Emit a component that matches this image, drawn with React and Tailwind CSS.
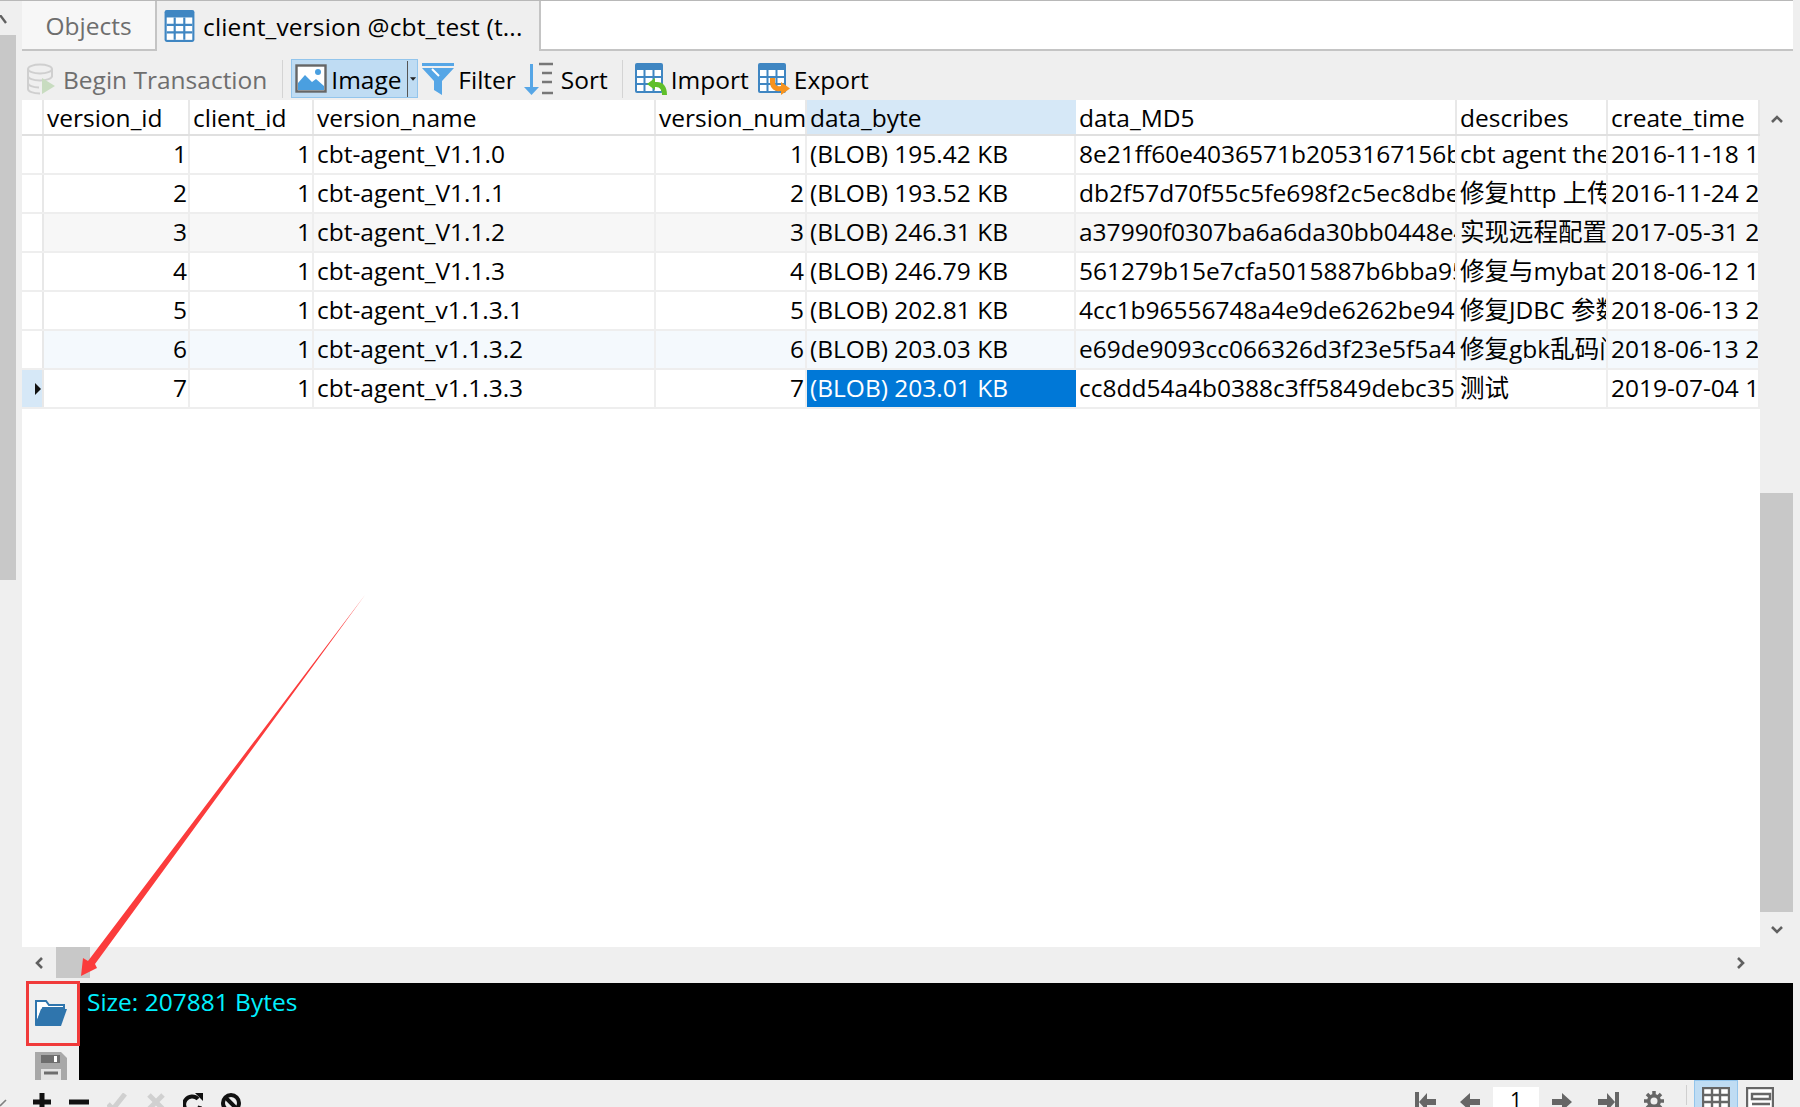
import React from 'react';

const FONT = { fontFamily: '"Open Sans", "Noto Sans CJK SC", sans-serif' };

const rows = [
  ['1', '1', 'cbt-agent_V1.1.0', '1', '(BLOB) 195.42 KB', '8e21ff60e4036571b2053167156b', 'cbt agent the', '2016-11-18 1'],
  ['2', '1', 'cbt-agent_V1.1.1', '2', '(BLOB) 193.52 KB', 'db2f57d70f55c5fe698f2c5ec8dbe', '修复http 上传', '2016-11-24 2'],
  ['3', '1', 'cbt-agent_V1.1.2', '3', '(BLOB) 246.31 KB', 'a37990f0307ba6a6da30bb0448e4', '实现远程配置:', '2017-05-31 2'],
  ['4', '1', 'cbt-agent_V1.1.3', '4', '(BLOB) 246.79 KB', '561279b15e7cfa5015887b6bba95', '修复与mybati', '2018-06-12 1'],
  ['5', '1', 'cbt-agent_v1.1.3.1', '5', '(BLOB) 202.81 KB', '4cc1b96556748a4e9de6262be94', '修复JDBC 参数', '2018-06-13 2'],
  ['6', '1', 'cbt-agent_v1.1.3.2', '6', '(BLOB) 203.03 KB', 'e69de9093cc066326d3f23e5f5a4', '修复gbk乱码问', '2018-06-13 2'],
  ['7', '1', 'cbt-agent_v1.1.3.3', '7', '(BLOB) 203.01 KB', 'cc8dd54a4b0388c3ff5849debc35', '测试', '2019-07-04 1'],
];

const headers = ['version_id', 'client_id', 'version_name', 'version_num', 'data_byte', 'data_MD5', 'describes', 'create_time'];
const rightAligned = [true, true, false, true, false, false, false, false];
const GRID = 'grid grid-cols-[22px_146px_124px_342px_151px_269px_381px_151px_152px]';

function TableShape() {
  return (
    <>
      <rect x="0" y="0" width="28" height="30" rx="2" fill="#3f86c2" />
      <rect x="2" y="7" width="24" height="21" fill="#fff" />
      <path d="M2 14h24M2 21h24M9.500 7v21M18.500 7v21" stroke="#3f86c2" strokeWidth="2" />
    </>
  );
}

function TableIcon({ children }) {
  return (
    <svg width="32" height="32" viewBox="0 0 32 32" className="shrink-0">
      <TableShape />
      {children}
    </svg>
  );
}

function ToolButton({ icon, label, gray, gap = 'gap-[5px]' }) {
  return (
    <div className={`flex items-center ${gap} text-[24.5px] ${gray ? 'text-[#6e6e6e]' : 'text-black'}`}>
      {icon}
      <span className="pt-[3px]">{label}</span>
    </div>
  );
}

function Chevron({ d }) {
  return (
    <svg width="14" height="14" viewBox="0 0 14 14">
      <path d={d} fill="none" stroke="#606060" strokeWidth="2.6" />
    </svg>
  );
}

function Toolbar() {
  return (
    <div className="flex items-center h-[49px] shrink-0 pl-[4px] pt-[6px] bg-[#efefef]">
      <ToolButton
        gray
        gap="gap-[7px]"
        label="Begin Transaction"
        icon={
          <svg width="30" height="32" viewBox="0 0 30 32">
            <ellipse cx="14" cy="6" rx="12" ry="4.5" fill="none" stroke="#cfcfcf" strokeWidth="2" />
            <path d="M2 6v20c0 2.5 5 4.5 12 4.5M26 6v8M2 13c0 2.5 5 4.5 12 4.5s12-2 12-4.5M2 20c0 2.5 5 4.5 11 4.5" fill="none" stroke="#cfcfcf" strokeWidth="2" />
            <path d="M16 15l13 8-13 8z" fill="#c8dcc0" />
          </svg>
        }
      />
      <div className="w-[1px] h-[38px] bg-[#d4d4d4] ml-[15px] mr-[8px]" />
      <div className="flex items-center h-[39px] w-[127px] shrink-0 bg-[#bfdcf3] border border-[#93c5ec] pl-[3px] text-[24.5px]">
        <svg width="32" height="29" viewBox="0 0 32 29" className="shrink-0">
          <rect x="1.5" y="1.5" width="29" height="26" fill="#fff" stroke="#666" strokeWidth="2.4" />
          <path d="M3 26V19l7-8 7 7 4-3 8 7v4z" fill="#4a9fe0" />
          <circle cx="23" cy="8" r="3" fill="#4a9fe0" />
        </svg>
        <span className="ml-[4px] pt-[3px]">Image</span>
        <div className="ml-[5px] w-[1px] h-[36px] bg-[#555]" />
        <svg width="8" height="4" viewBox="0 0 8 4" className="ml-[3px]"><path d="M0 0h7L3.5 4z" fill="#222" /></svg>
      </div>
      <div className="ml-[4px]">
        <ToolButton
          label="Filter"
          gap="gap-[4px]"
          icon={
            <svg width="32" height="32" viewBox="0 0 32 32">
              <path d="M0 0h32v3H0zM0 5h32L20 18v14l-8-5v-9z" fill="#56a6e6" />
              <path d="M10 6l7 7" stroke="#fff" strokeWidth="2" />
            </svg>
          }
        />
      </div>
      <div className="ml-[6px]">
        <ToolButton
          label="Sort"
          gap="gap-[7px]"
          icon={
            <svg width="32" height="34" viewBox="0 0 32 34">
              <path d="M8 2h3v23h6L9.500 33 2 25h6z" fill="#56a6e6" />
              <path d="M17 2h14M20 11h10M20 20h10M20 31h11" stroke="#777" strokeWidth="2.4" />
            </svg>
          }
        />
      </div>
      <div className="w-[1px] h-[38px] bg-[#d4d4d4] ml-[14px] mr-[12px]" />
      <ToolButton
        label="Import"
        gap="gap-[4px]"
        icon={
          <TableIcon>
            <path d="M12 21L20 15V19H22C28 19 32 23 32 32H27C27 27 25 24 21 24H20V27z" fill="#5fbf2a" />
          </TableIcon>
        }
      />
      <div className="ml-[9px]">
        <ToolButton
          label="Export"
          gap="gap-[4px]"
          icon={
            <TableIcon>
              <path d="M12 15H17V19C17 22 19 24 23 23V19L32 25.5 23 32V28C16 29 12 25 12 19z" fill="#f7931e" />
            </TableIcon>
          }
        />
      </div>
    </div>
  );
}

function Table() {
  return (
    <div className="flex-1 min-h-0 bg-white text-[24.5px] text-black">
      <div className={`${GRID} h-[36px] border-b-2 border-[#e0e0e0]`}>
        <div className="border-r-2 border-[#e8e8e8]" />
        {headers.map((h, i) => (
          <div
            key={h}
            className={`overflow-hidden whitespace-nowrap pl-[3px] leading-[35px] ${i === 4 ? 'bg-[#d6e8f7]' : 'border-r-2 border-[#e8e8e8]'}`}
          >
            {h}
          </div>
        ))}
      </div>
      {rows.map((row, r) => (
        <div
          key={r}
          className={`${GRID} h-[39px] border-b-2 border-[#eeeeee] ${r === 2 ? 'bg-[#f7f7f7]' : ''} ${r === 5 ? 'bg-[#f4f9fd]' : ''}`}
        >
          <div className={`flex items-center pl-[13px] border-r-2 border-[#e8e8e8] ${r === 6 ? 'bg-[#d6e8f7]' : 'bg-white'}`}>
            {r === 6 && <svg width="6" height="12" viewBox="0 0 6 12"><path d="M0 0l6 6-6 6z" fill="#111" /></svg>}
          </div>
          {row.map((cell, c) => (
            <div
              key={c}
              className={`overflow-hidden whitespace-nowrap leading-[36px] ${rightAligned[c] ? 'text-right pr-[1px]' : 'pl-[3px]'} ${r === 6 && c === 4 ? 'bg-[#0078d7] text-white' : 'border-r-2 border-[#eeeeee]'}`}
            >
              {cell}
            </div>
          ))}
        </div>
      ))}
    </div>
  );
}

function BottomIcons() {
  return (
    <div className="flex items-start h-[27px] shrink-0 overflow-hidden bg-[#efefef]">
      <div className="flex items-start w-[260px] pt-[13px] pl-[11px] gap-[18px]">
        <svg width="18" height="18" viewBox="0 0 18 18"><path d="M9 0v18M0 9h18" stroke="#111" strokeWidth="5" /></svg>
        <svg width="20" height="18" viewBox="0 0 20 18"><path d="M0 9h20" stroke="#111" strokeWidth="5" /></svg>
        <svg width="20" height="18" viewBox="0 0 20 18"><path d="M1 11l5 5L18 1" fill="none" stroke="#d0d0d0" strokeWidth="5" /></svg>
        <svg width="18" height="18" viewBox="0 0 18 18" className="ml-[2px]"><path d="M2 2l14 14M16 2L2 16" stroke="#d0d0d0" strokeWidth="5" /></svg>
        <svg width="20" height="20" viewBox="0 0 20 20"><path d="M15 6a8 8 0 1 0 2 7" fill="none" stroke="#111" strokeWidth="4" /><path d="M12 0h8v8z" fill="#111" /></svg>
        <svg width="20" height="20" viewBox="0 0 20 20"><circle cx="10" cy="10" r="8" fill="none" stroke="#111" strokeWidth="4" /><path d="M4 4l12 12" stroke="#111" strokeWidth="4" /></svg>
      </div>
      <div className="flex-1" />
      <div className="flex items-start h-full mr-[19px]">
        <svg width="22" height="20" viewBox="0 0 22 20" className="mt-[12px] mr-[24px]"><path d="M1 0h4v20H1zM22 7H13V1L5 10l8 9v-6h9z" fill="#666" /></svg>
        <svg width="20" height="20" viewBox="0 0 20 20" className="mt-[12px] mr-[13px]"><path d="M20 7h-10V1L0 10l10 9v-6h10z" fill="#666" /></svg>
        <div className="w-[46px] h-[20px] mt-[7px] bg-white text-center text-[21px] leading-[26px] text-black">1</div>
        <svg width="20" height="20" viewBox="0 0 20 20" className="mt-[12px] ml-[13px] mr-[26px]"><path d="M0 7h10V1l10 9-10 9v-6H0z" fill="#666" /></svg>
        <svg width="22" height="20" viewBox="0 0 22 20" className="mt-[12px] mr-[24px]"><path d="M21 0h-4v20h4zM0 7h9V1l8 9-8 9v-6H0z" fill="#666" /></svg>
        <svg width="20" height="20" viewBox="0 0 20 20" className="mt-[11px]">
          <path d="M10 0v20M0 10h20M3 3l14 14M17 3L3 17" stroke="#666" strokeWidth="3.500" />
          <circle cx="10" cy="10" r="7" fill="#666" />
          <circle cx="10" cy="10" r="3.500" fill="#efefef" />
        </svg>
        <div className="w-[1px] h-[20px] bg-[#cfcfcf] mt-[5px] ml-[22px] mr-[7px]" />
        <div className="flex justify-center w-[44px] h-full pt-[6px] bg-[#bfdcf3] border border-[#93c5ec] border-b-0 mr-[8px]">
          <svg width="28" height="22" viewBox="0 0 28 22"><rect x="1" y="1" width="26" height="24" fill="#fff" stroke="#666" strokeWidth="2.400" /><path d="M1 8h26M1 15h26M10 1v24M18 1v24" stroke="#666" strokeWidth="2.400" /></svg>
        </div>
        <svg width="28" height="22" viewBox="0 0 28 22" className="mt-[7px]"><rect x="1" y="1" width="26" height="24" fill="#fff" stroke="#666" strokeWidth="2.400" /><path d="M6 7h18v5H6zM6 17h18" fill="none" stroke="#666" strokeWidth="2.400" /></svg>
      </div>
    </div>
  );
}

export default function App() {
  return (
    <div className="relative flex w-[1800px] h-[1107px] overflow-hidden bg-[#efefef]" style={FONT}>
      {/* left edge: outer scrollbar strip */}
      <div className="flex flex-col w-[22px] shrink-0 bg-[#efefef]">
        <div className="h-[1px] bg-[#b8b8b8]" />
        <div className="w-[16px] h-[34px] pt-[14px]">
          <svg width="8" height="10" viewBox="0 0 8 10"><path d="M0 0l6 8" fill="none" stroke="#606060" strokeWidth="2.400" /></svg>
        </div>
        <div className="w-[16px] h-[545px] bg-[#c8c8c8]" />
        <svg width="8" height="8" viewBox="0 0 8 8" className="mt-auto"><path d="M0 7l6-6" fill="none" stroke="#808080" strokeWidth="1.600" /></svg>
      </div>

      <div className="flex flex-col w-[1771px] shrink-0">
        <div className="h-[1px] shrink-0 bg-[#b8b8b8]" />
        {/* tab strip */}
        <div className="flex h-[50px] shrink-0 text-[24.5px] bg-white border-b-2 border-[#c4c4c4]">
          <div className="flex items-center justify-center w-[135px] pt-[3px] bg-[#f7f7f7] text-[#6e6e6e] border-r-2 border-[#c4c4c4]">Objects</div>
          <div className="flex items-center w-[384px] pl-[7px] -mb-[2px] bg-[#efefef] text-black gap-[8px] border-r-2 border-[#c4c4c4]">
            <svg width="31" height="32" viewBox="0 0 28 30" className="shrink-0"><TableShape /></svg>
            <span className="pt-[3px] tracking-[0.15px]">client_version @cbt_test (t...</span>
          </div>
          <div className="flex-1 min-w-0" />
        </div>
        <Toolbar />

        <div className="flex flex-1 min-h-0 bg-[#efefef]">
          <Table />
          {/* vertical scrollbar */}
          <div className="flex flex-col items-center w-[33px] shrink-0">
            <div className="flex items-center justify-center h-[38px]"><Chevron d="M2 10l5-5 5 5" /></div>
            <div className="h-[355px]" />
            <div className="w-full h-[419px] bg-[#c8c8c8]" />
            <div className="flex items-center justify-center h-[35px]"><Chevron d="M2 4l5 5 5-5" /></div>
          </div>
        </div>

        {/* horizontal scrollbar */}
        <div className="flex items-start h-[36px] shrink-0 bg-[#efefef]">
          <div className="flex items-center justify-center w-[34px] h-[32px]"><Chevron d="M10 2L5 7l5 5" /></div>
          <div className="w-[34px] h-[31px] bg-[#c8c8c8]" />
          <div className="flex-1" />
          <div className="flex items-center justify-center w-[70px] h-[32px] pr-[34px]"><Chevron d="M4 2l5 5-5 5" /></div>
        </div>

        {/* blob viewer */}
        <div className="flex h-[97px] shrink-0">
          <div className="flex flex-col w-[57px] shrink-0 bg-[#efefef] overflow-visible">
            <div className="relative flex items-center justify-center w-[54px] h-[66px] -mt-[2px] ml-[4px] pr-[4px] pb-[4px] border-[3px] border-[#f03a3a] z-10">
              <svg width="34" height="30" viewBox="0 0 34 30" className="shrink-0">
                <path d="M2 28V4h10l3 4h15v3H9z" fill="#fff" stroke="#2f75ad" strokeWidth="2" />
                <path d="M1 29l6-17h26l-6 17z" fill="#2f75ad" />
              </svg>
            </div>
            <div className="flex justify-center w-[54px] ml-[4px] pr-[4px] pt-[6px]">
              <svg width="32" height="28" viewBox="0 0 32 28">
                <path d="M0 0h26l6 6v22H0z" fill="#a8a8a8" />
                <path d="M6 3h19v8H6z" fill="#6e6e6e" />
                <path d="M19 4h3v6h-3z" fill="#fff" />
                <path d="M6 17h20v11H6z" fill="#e4e4e4" />
                <path d="M9 21h14" stroke="#6e6e6e" strokeWidth="3" />
              </svg>
            </div>
          </div>
          <div className="flex-1 bg-black pl-[8px] pt-[2px] text-[24.5px] leading-[34px] text-[#00f0ff]">Size: 207881 Bytes</div>
        </div>

        <BottomIcons />
      </div>

      {/* red annotation arrow */}
      <svg width="1800" height="1107" viewBox="0 0 1800 1107" className="absolute inset-0 pointer-events-none">
        <path d="M365 595L95 964 97 968 81 976 83 958 88 961z" fill="#fb3c3c" />
      </svg>
    </div>
  );
}
